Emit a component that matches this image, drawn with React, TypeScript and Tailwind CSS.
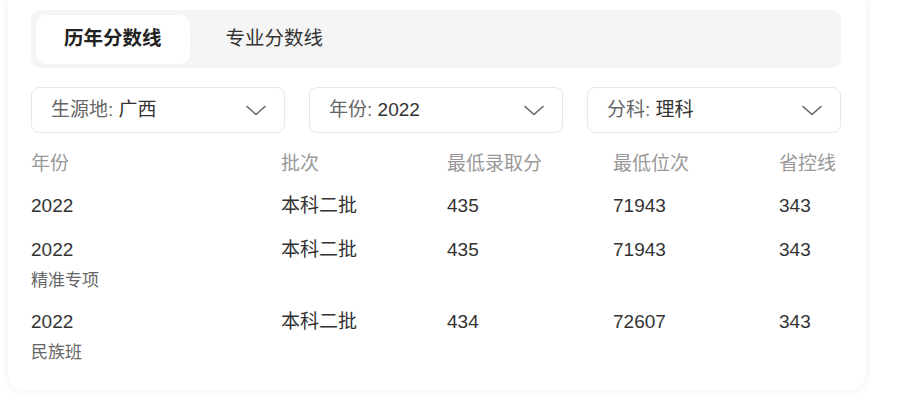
type ScoreRow = {
  year: string;
  tag?: string;
  batch: string;
  minScore: string;
  minRank: string;
  controlLine: string;
};

const ROWS: ScoreRow[] = [
  { year: '2022', batch: '本科二批', minScore: '435', minRank: '71943', controlLine: '343' },
  { year: '2022', tag: '精准专项', batch: '本科二批', minScore: '435', minRank: '71943', controlLine: '343' },
  { year: '2022', tag: '民族班', batch: '本科二批', minScore: '434', minRank: '72607', controlLine: '343' },
];

const FILTERS = [
  { label: '生源地:', value: '广西' },
  { label: '年份:', value: '2022' },
  { label: '分科:', value: '理科' },
];

const cols = 'grid grid-cols-[250px_166px_166px_166px_1fr]';

function Chevron() {
  return (
    <svg width="20" height="11" viewBox="0 0 20 11" fill="none" className="text-[#666]">
      <polyline points="1,1.5 10,9.5 19,1.5" stroke="currentColor" strokeWidth="1.6" strokeLinecap="round" strokeLinejoin="round" />
    </svg>
  );
}

function Select({ label, value }: { label: string; value: string }) {
  return (
    <div className="h-[46px] flex items-center justify-between rounded-[8px] border border-[#e8e8e8] bg-white pl-[19px] pr-[18px] text-[19px]">
      <span>
        <span className="text-[#666]">{label} </span>
        <span className="text-[#333]">{value}</span>
      </span>
      <Chevron />
    </div>
  );
}

export default function App() {
  return (
    <div
      className="min-h-[402px] bg-white pl-2 pr-[31px]"
      style={{ fontFamily: '"Liberation Sans", "Noto Sans CJK SC", sans-serif' }}
    >
      <div className="rounded-b-2xl bg-white pl-[23px] pr-[25px] pt-[10px] pb-[16px] shadow-[0_0_10px_rgba(0,0,0,0.07)]">
        <div className="h-[58px] flex items-center gap-2 rounded-[10px] bg-[#f5f5f5] px-[5px]">
          <div className="h-[49px] flex items-center rounded-[10px] bg-white px-7 text-[19.5px] font-bold text-[#222]">
            历年分数线
          </div>
          <div className="h-[49px] flex items-center px-7 text-[19.5px] text-[#333]">专业分数线</div>
        </div>

        <div className="mt-[19px] grid grid-cols-3 gap-6">
          {FILTERS.map((f) => (
            <Select key={f.label} label={f.label} value={f.value} />
          ))}
        </div>

        <div className={`${cols} mt-[9px] h-[44px] items-center text-[19px] text-[#999]`}>
          <span>年份</span>
          <span>批次</span>
          <span>最低录取分</span>
          <span>最低位次</span>
          <span>省控线</span>
        </div>

        {ROWS.map((r, i) => (
          <div
            key={i}
            className={`${cols} pt-[6px] ${r.tag ? 'pb-[8px]' : 'pb-[10px]'} text-[19px] leading-[28px] text-[#333]`}
          >
            <div>
              <p>{r.year}</p>
              {r.tag && <p className="mt-[4px] text-[17px] leading-[26px] text-[#666]">{r.tag}</p>}
            </div>
            <span>{r.batch}</span>
            <span>{r.minScore}</span>
            <span>{r.minRank}</span>
            <span>{r.controlLine}</span>
          </div>
        ))}
      </div>
    </div>
  );
}
